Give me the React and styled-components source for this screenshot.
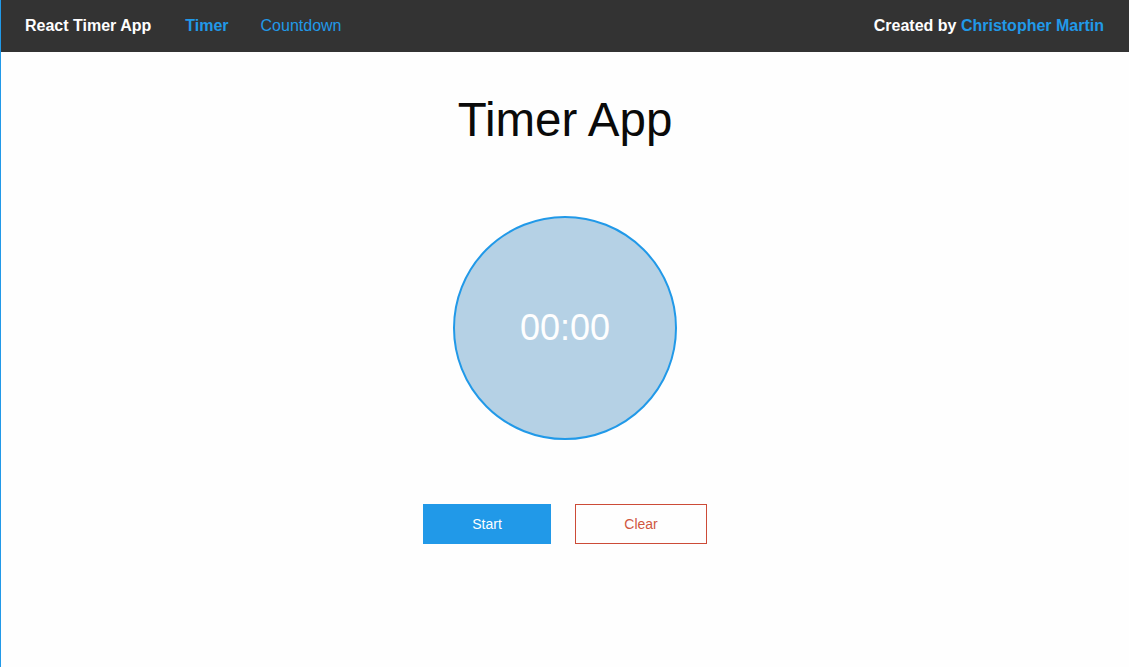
import React from 'react'
import styled, { createGlobalStyle } from 'styled-components'

const GlobalStyle = createGlobalStyle`
  html, body {
    margin: 0;
    padding: 0;
    background: #fefefe;
    font-family: 'Liberation Sans', Arial, sans-serif;
    color: #0a0a0a;
  }
  * {
    box-sizing: border-box;
  }
`

const Page = styled.div`
  min-height: 100vh;
  border-left: 1px solid #2199e8;
  background: #fefefe;
`

const TopBar = styled.nav`
  height: 52px;
  background: #333333;
  display: flex;
  align-items: center;
  justify-content: space-between;
  padding: 0 25px 0 24px;
  font-size: 16px;
`

const LeftSide = styled.div`
  display: flex;
  align-items: center;
`

const Brand = styled.span`
  color: #fefefe;
  font-weight: 700;
  margin-right: 18px;
`

const Menu = styled.ul`
  display: flex;
  list-style: none;
  margin: 0;
  padding: 0;
`

const MenuLink = styled.a`
  display: block;
  padding: 0 16px;
  color: #2199e8;
  text-decoration: none;
  font-weight: ${(props) => (props.$active ? 700 : 400)};
  cursor: pointer;
`

const Credit = styled.span`
  color: #fefefe;
  font-weight: 700;
  a {
    color: #2199e8;
    text-decoration: none;
  }
`

const Main = styled.main`
  display: flex;
  flex-direction: column;
  align-items: center;
`

const Title = styled.h1`
  margin: 44px 0 0;
  font-size: 47.5px;
  line-height: 48px;
  font-weight: 400;
  color: #0a0a0a;
`

const Clock = styled.div`
  margin-top: 72px;
  width: 224px;
  height: 224px;
  border-radius: 50%;
  border: 2px solid #2199e8;
  background: #b5d1e5;
  display: flex;
  align-items: center;
  justify-content: center;
  color: #fefefe;
  font-size: 36px;
`

const Controls = styled.div`
  margin-top: 64px;
  display: flex;
  gap: 24px;
`

const Button = styled.button`
  height: 40px;
  width: ${(props) => props.$width}px;
  font-family: inherit;
  font-size: 14px;
  cursor: pointer;
  border: 1px solid ${(props) => (props.$hollow ? '#cc4b37' : '#2199e8')};
  background: ${(props) => (props.$hollow ? 'transparent' : '#2199e8')};
  color: ${(props) => (props.$hollow ? '#d0573f' : '#fefefe')};
  padding: 0;
`

const App = () => {
  return (
    <Page>
      <GlobalStyle />
      <TopBar>
        <LeftSide>
          <Brand>React Timer App</Brand>
          <Menu>
            <li><MenuLink $active>Timer</MenuLink></li>
            <li><MenuLink>Countdown</MenuLink></li>
          </Menu>
        </LeftSide>
        <Credit>
          Created by <a href="#">Christopher Martin</a>
        </Credit>
      </TopBar>
      <Main>
        <Title>Timer App</Title>
        <Clock>00:00</Clock>
        <Controls>
          <Button $width={128}>Start</Button>
          <Button $width={132} $hollow>Clear</Button>
        </Controls>
      </Main>
    </Page>
  )
}

export default App
